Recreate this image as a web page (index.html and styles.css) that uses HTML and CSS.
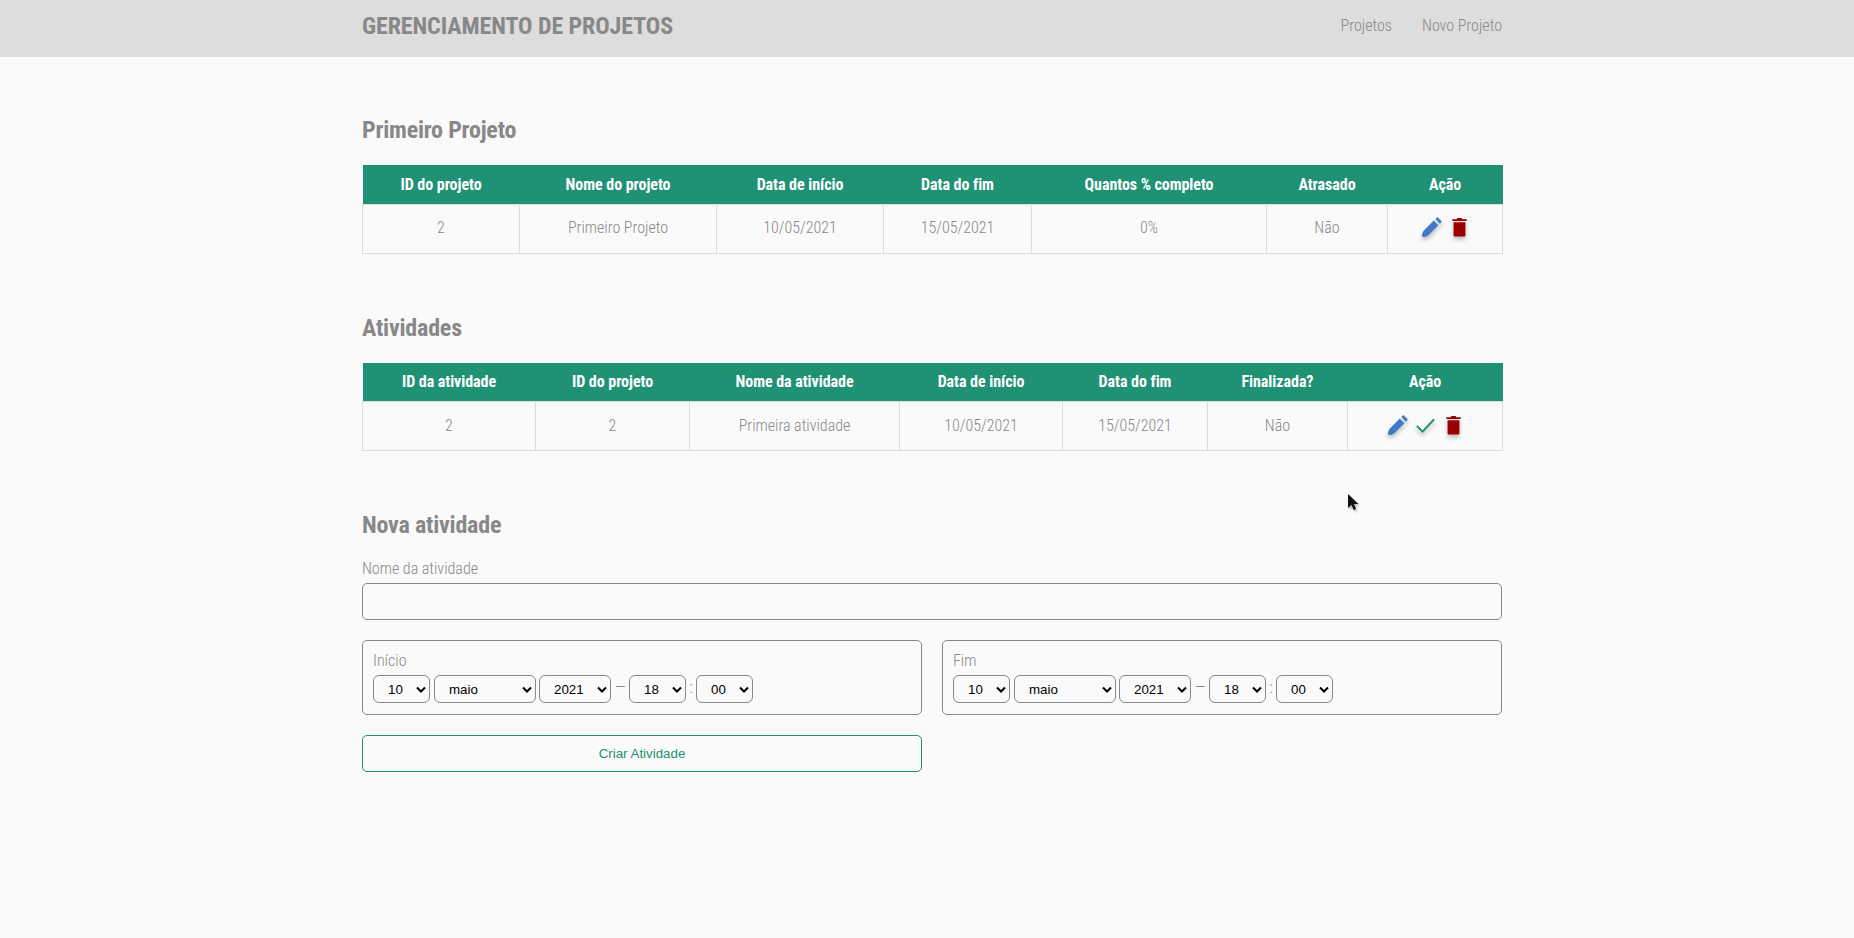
FILE: index.html
```html
<!DOCTYPE html>
<html lang="pt-BR">
<head>
  <meta charset="UTF-8" />
  <meta name="viewport" content="width=device-width, initial-scale=1.0"/>
  <title>Gerenciamento de Projetos</title>
  <link rel="stylesheet" href="styles.css">
</head>
<body>
  <header class="topbar">
    <div class="container topbar-inner">
      <a class="brand" href="#">GERENCIAMENTO DE PROJETOS</a>
      <nav class="nav">
        <a href="#">Projetos</a>
        <a href="#">Novo Projeto</a>
      </nav>
    </div>
  </header>

  <main class="container">
    <section class="block">
      <h2>Primeiro Projeto</h2>
      <table class="grid">
        <colgroup>
          <col class="w157"><col class="w197"><col class="w167"><col class="w148"><col class="w235"><col class="w121"><col class="w115">
        </colgroup>
        <thead>
          <tr>
            <th>ID do projeto</th><th>Nome do projeto</th><th>Data de início</th><th>Data do fim</th><th>Quantos % completo</th><th>Atrasado</th><th>Ação</th>
          </tr>
        </thead>
        <tbody>
          <tr>
            <td>2</td><td>Primeiro Projeto</td><td>10/05/2021</td><td>15/05/2021</td><td>0%</td><td>Não</td>
            <td>
              <div class="actions">
                <svg class="icon" viewBox="0 0 24 24"><path class="blue" d="M2.600 21.400c-.6-.6-.8-1.600-.4-2.600l1.400-3.200L14.400 4.800l4.800 4.800L8.400 20.400l-3.200 1.400c-1 .4-2 .2-2.600-.4zM16 3.200l1.500-1.500c.4-.4 1-.4 1.400 0l3.400 3.400c.4.4.4 1 0 1.400L20.800 8z"/></svg>
                <svg class="icon" viewBox="0 0 24 24"><path class="red" d="M4.500 3.500h5V2h5v1.500h5v1.700h-15zM5.800 6.500h12.400v13.200c0 1-.8 1.800-1.800 1.800H7.600c-1 0-1.800-.8-1.800-1.800z"/></svg>
              </div>
            </td>
          </tr>
        </tbody>
      </table>
    </section>

    <section class="block">
      <h2>Atividades</h2>
      <table class="grid">
        <colgroup>
          <col class="w173"><col class="w154"><col class="w210"><col class="w163"><col class="w145"><col class="w140"><col class="w155">
        </colgroup>
        <thead>
          <tr>
            <th>ID da atividade</th><th>ID do projeto</th><th>Nome da atividade</th><th>Data de início</th><th>Data do fim</th><th>Finalizada?</th><th>Ação</th>
          </tr>
        </thead>
        <tbody>
          <tr>
            <td>2</td><td>2</td><td>Primeira atividade</td><td>10/05/2021</td><td>15/05/2021</td><td>Não</td>
            <td>
              <div class="actions">
                <svg class="icon" viewBox="0 0 24 24"><path class="blue" d="M2.600 21.400c-.6-.6-.8-1.600-.4-2.600l1.400-3.200L14.400 4.800l4.800 4.800L8.400 20.400l-3.200 1.400c-1 .4-2 .2-2.600-.4zM16 3.200l1.500-1.500c.4-.4 1-.4 1.400 0l3.400 3.400c.4.4.4 1 0 1.400L20.800 8z"/></svg>
                <svg class="icon" viewBox="0 0 24 24"><path class="check" d="M3 12.500l6 6L21 5.500"/></svg>
                <svg class="icon" viewBox="0 0 24 24"><path class="red" d="M4.500 3.500h5V2h5v1.500h5v1.700h-15zM5.800 6.500h12.400v13.200c0 1-.8 1.800-1.800 1.800H7.600c-1 0-1.800-.8-1.800-1.800z"/></svg>
              </div>
            </td>
          </tr>
        </tbody>
      </table>
    </section>

    <section class="block">
      <h2 class="form-title">Nova atividade</h2>
      <form>
        <label class="field-label" for="nome">Nome da atividade</label>
        <input class="text-input" id="nome" type="text">

        <div class="two-cols">
          <fieldset class="date-box">
            <span class="date-label">Início</span>
            <div class="date-row">
              <select class="s-day"><option>10</option></select>
              <select class="s-month"><option>maio</option></select>
              <select class="s-year"><option>2021</option></select>
              <span class="sep sep-dash">—</span>
              <select class="s-day"><option>18</option></select>
              <span class="sep sep-colon">:</span>
              <select class="s-day"><option>00</option></select>
            </div>
          </fieldset>
          <fieldset class="date-box">
            <span class="date-label">Fim</span>
            <div class="date-row">
              <select class="s-day"><option>10</option></select>
              <select class="s-month"><option>maio</option></select>
              <select class="s-year"><option>2021</option></select>
              <span class="sep sep-dash">—</span>
              <select class="s-day"><option>18</option></select>
              <span class="sep sep-colon">:</span>
              <select class="s-day"><option>00</option></select>
            </div>
          </fieldset>
          <button class="submit-btn" type="button">Criar Atividade</button>
        </div>
      </form>
    </section>
  </main>

  <svg class="cursor" viewBox="0 0 12 19"><path d="M1 1v14l3.400-3.200 2.300 5.200 2.400-1-2.300-5h4.600z"/></svg>
</body>
</html>
```

FILE: styles.css
```css
* {
  box-sizing: border-box;
}
body {
  margin: 0;
  height: 938px;
  overflow: hidden;
  font-family: Roboto, "Liberation Sans", sans-serif;
  font-size: 16px;
  font-weight: 300;
  font-stretch: 75%;
  color: #888;
  background-color: #fafafa;
}
.container {
  width: 1140px;
  margin-left: 362px;
}
.topbar {
  height: 57px;
  background-color: #ddd;
}
.topbar-inner {
  height: 52px;
  display: flex;
  align-items: center;
  justify-content: space-between;
}
.brand {
  font-size: 24px;
  font-weight: 700;
  letter-spacing: -0.1px;
  color: #888;
  text-decoration: none;
}
.nav {
  display: flex;
  gap: 30px;
  margin-bottom: 2px;
}
.nav a {
  color: #888;
  text-decoration: none;
}
main {
  padding-top: 50px;
}
.block {
  margin-bottom: 51px;
}
h2 {
  margin: 0 0 10px;
  height: 48px;
  padding-bottom: 2px;
  display: flex;
  align-items: center;
  font-size: 24px;
  font-weight: 700;
  letter-spacing: -0.2px;
  line-height: 46px;
}
.form-title {
  margin-bottom: 9px;
}
.grid {
  width: 100%;
  table-layout: fixed;
  border-collapse: collapse;
}
.w157 { width: 157px; }
.w197 { width: 197px; }
.w167 { width: 167px; }
.w148 { width: 148px; }
.w235 { width: 235px; }
.w121 { width: 121px; }
.w115 { width: 115px; }
.w173 { width: 173px; }
.w154 { width: 154px; }
.w210 { width: 210px; }
.w163 { width: 163px; }
.w145 { width: 145px; }
.w140 { width: 140px; }
.w155 { width: 155px; }
.grid th {
  height: 39px;
  padding: 0;
  color: #fff;
  font-weight: 700;
  letter-spacing: -0.05px;
  background-color: #1f9174;
}
.grid td {
  height: 49px;
  padding: 0 0 2px;
  text-align: center;
  border: 1px solid #ddd;
}
.actions {
  display: flex;
  justify-content: center;
  gap: 5px;
}
.icon {
  width: 23px;
  height: 23px;
  filter: drop-shadow(0 3px 2px rgba(0, 0, 0, 0.25));
}
.blue { fill: #3f79c9; }
.red { fill: #9b0000; }
.check {
  fill: none;
  stroke: #1f9174;
  stroke-width: 2;
}
.field-label {
  display: block;
  margin-bottom: 5px;
}
.text-input {
  display: block;
  width: 100%;
  height: 37px;
  margin-bottom: 20px;
  background: transparent;
  border: 1px solid #888;
  border-radius: 5px;
}
.two-cols {
  display: grid;
  grid-template-columns: 1fr 1fr;
  gap: 20px;
}
.date-box {
  height: 75px;
  margin: 0;
  min-width: 0;
  padding: 9px 10px;
  border: 1px solid #888;
  border-radius: 5px;
}
.date-label {
  display: block;
  height: 22px;
  line-height: 22px;
  margin-bottom: 3px;
}
.date-row {
  display: flex;
  align-items: center;
}
select {
  appearance: none;
  height: 28px;
  padding: 0 0 0 14px;
  font-family: "Liberation Sans", sans-serif;
  font-size: 13.33px;
  font-stretch: normal;
  color: #000;
  background: #fafafa url("data:image/svg+xml,%3Csvg xmlns='http://www.w3.org/2000/svg' viewBox='0 0 10 7'%3E%3Cpath d='M1 1.500l4 4 4-4' fill='none' stroke='%23000' stroke-width='2'/%3E%3C/svg%3E") no-repeat right 3px center / 10px 7px;
  border: 1px solid #888;
  border-radius: 6px;
}
.s-day { width: 57px; }
.s-month {
  width: 102px;
  margin: 0 3px 0 4px;
}
.s-year { width: 72px; }
.sep {
  font-size: 16px;
  text-align: center;
  margin-bottom: 3px;
}
.sep-dash { width: 18px; }
.sep-colon { width: 10px; }
.submit-btn {
  height: 37px;
  font-family: "Liberation Sans", sans-serif;
  font-size: 13.33px;
  font-stretch: normal;
  color: #1f9174;
  background: transparent;
  border: 1px solid #1f9174;
  border-radius: 5px;
}
.cursor {
  position: absolute;
  left: 1347px;
  top: 493px;
  width: 12px;
  height: 19px;
  fill: #111;
  filter: drop-shadow(1px 2px 1px rgba(0, 0, 0, 0.3));
}
```
